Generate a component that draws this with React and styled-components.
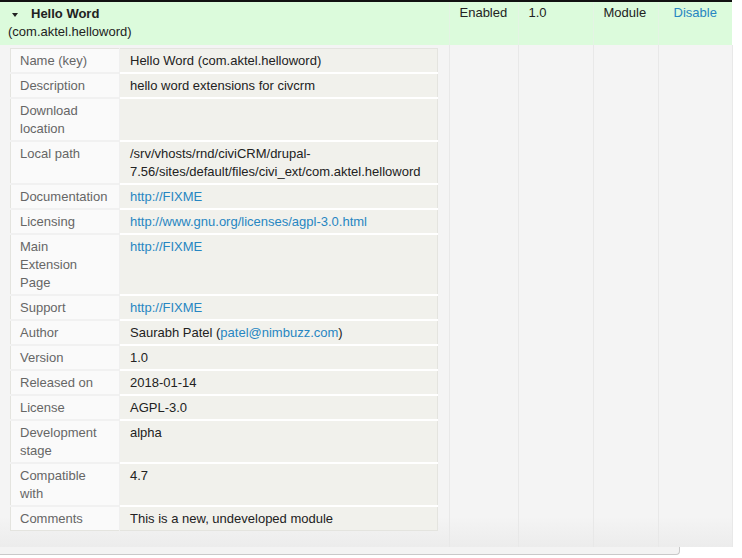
import React from "react";
import styled, { createGlobalStyle } from "styled-components";

const GlobalStyle = createGlobalStyle`
  body {
    margin: 0;
    background: #fff;
    font-family: "Liberation Sans", Arial, sans-serif;
    font-size: 13px;
    color: #222;
  }
`;

const Page = styled.div`
  width: 742px;
  height: 558px;
  overflow: hidden;
`;

const ExtTable = styled.table`
  width: 732px;
  border-collapse: collapse;
  table-layout: fixed;
  border-top: 2px solid #111;
`;

const HeaderRow = styled.tr`
  background: #dcfbdc;
`;

const HeadCell = styled.td`
  vertical-align: top;
  line-height: 18px;
  padding: ${(p) => (p.$first ? "3px 8px 4px" : "2px 10px 5px")};
  text-align: ${(p) => p.$align || "left"};
  border-left: ${(p) => (p.$first ? "none" : "1px solid #e4f4e4")};
  white-space: nowrap;
`;

const Title = styled.div`
  display: flex;
  align-items: center;
  font-weight: bold;
`;

const Caret = styled.span`
  width: 0;
  height: 0;
  margin: 1px 13px 0 4px;
  border-left: 3.5px solid transparent;
  border-right: 3.5px solid transparent;
  border-top: 4px solid #222;
`;

const Link = styled.a`
  color: #2786c2;
  text-decoration: none;
`;

const DetailRow = styled.tr`
  background: linear-gradient(to bottom, #f4f4f4 0%, #f4f4f4 94%, #ececec 100%);
`;

const DetailCell = styled.td`
  vertical-align: top;
  padding: ${(p) => (p.$first ? "3px 11px 16px 10px" : "0")};
  border-left: ${(p) => (p.$first ? "none" : "1px solid #e8e8e8")};
  border-right: ${(p) => (p.$last ? "1px solid #e8e8e8" : "none")};
`;

const InfoTable = styled.table`
  width: 100%;
  border-collapse: collapse;
  table-layout: fixed;
  border: 1px solid #e4e4df;
  line-height: 18px;
`;

const InfoRow = styled.tr`
  &:last-child td {
    border-bottom: none;
  }
`;

const Label = styled.td`
  padding: 3px 11px 2px 9px;
  vertical-align: top;
  color: #666;
  background: #fafafa;
  border-bottom: 2px solid #f1f1f1;
  border-right: 1px solid #f0f0f0;
`;

const Value = styled.td`
  padding: 3px 4px 2px 10px;
  vertical-align: top;
  color: #222;
  background: #f1f1ec;
  border-bottom: 2px solid #fff;
`;

const Footer = styled.div`
  width: 679px;
  height: 7px;
  background: #f3f3f3;
  border-bottom: 1px solid #c9c9c9;
  border-right: 1px solid #c9c9c9;
  border-bottom-right-radius: 4px;
`;

const details = [
  ["Name (key)", "Hello Word (com.aktel.helloword)"],
  ["Description", "hello word extensions for civcrm"],
  ["Download location", ""],
  ["Local path", "/srv/vhosts/rnd/civiCRM/drupal-7.56/sites/default/files/civi_ext/com.aktel.helloword"],
  ["Documentation", <Link href="#">http://FIXME</Link>],
  ["Licensing", <Link href="#">http://www.gnu.org/licenses/agpl-3.0.html</Link>],
  ["Main Extension Page", <Link href="#">http://FIXME</Link>],
  ["Support", <Link href="#">http://FIXME</Link>],
  [
    "Author",
    <>
      Saurabh Patel (<Link href="#">patel@nimbuzz.com</Link>)
    </>,
  ],
  ["Version", "1.0"],
  ["Released on", "2018-01-14"],
  ["License", "AGPL-3.0"],
  ["Development stage", "alpha"],
  ["Compatible with", "4.7"],
  ["Comments", "This is a new, undeveloped module"],
];

const App = () => {
  return (
    <Page>
      <GlobalStyle />
      <ExtTable>
        <colgroup>
          <col style={{ width: 449 }} />
          <col style={{ width: 69 }} />
          <col style={{ width: 75 }} />
          <col style={{ width: 65 }} />
          <col style={{ width: 74 }} />
        </colgroup>
        <tbody>
          <HeaderRow>
            <HeadCell $first>
              <Title>
                <Caret />
                Hello Word
              </Title>
              <div>(com.aktel.helloword)</div>
            </HeadCell>
            <HeadCell>Enabled</HeadCell>
            <HeadCell>1.0</HeadCell>
            <HeadCell>Module</HeadCell>
            <HeadCell $align="center">
              <Link href="#">Disable</Link>
            </HeadCell>
          </HeaderRow>
          <DetailRow>
            <DetailCell $first>
              <InfoTable>
                <colgroup>
                  <col style={{ width: 109 }} />
                  <col />
                </colgroup>
                <tbody>
                  {details.map(([k, v]) => (
                    <InfoRow key={k}>
                      <Label>{k}</Label>
                      <Value>{v}</Value>
                    </InfoRow>
                  ))}
                </tbody>
              </InfoTable>
            </DetailCell>
            <DetailCell />
            <DetailCell />
            <DetailCell />
            <DetailCell $last />
          </DetailRow>
        </tbody>
      </ExtTable>
      <Footer />
    </Page>
  );
};

export default App;
